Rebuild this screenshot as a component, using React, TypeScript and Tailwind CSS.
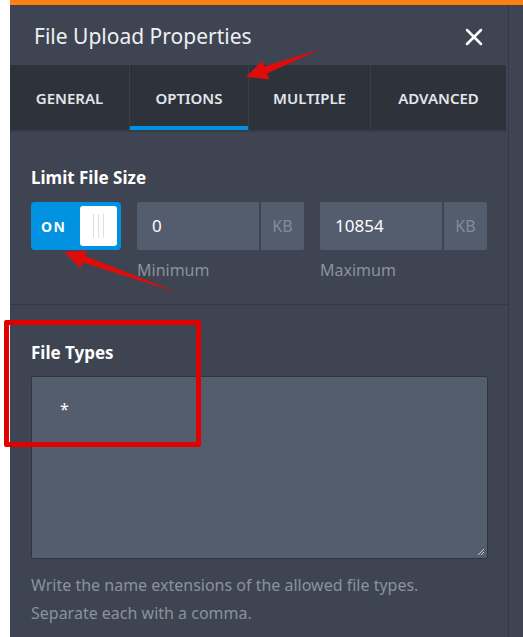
import { X } from "lucide-react";

const TABS = [
  { label: "GENERAL", w: "w-[119px]" },
  { label: "OPTIONS", w: "w-[119px]", active: true },
  { label: "MULTIPLE", w: "w-[122px]" },
  { label: "ADVANCED", w: "flex-1" },
];

function SizeInput({ value, label }: { value: string; label: string }) {
  return (
    <div className="flex flex-col">
      <div className="flex h-[48px] gap-[2px]">
        <div className="flex w-[122px] items-center rounded-l-[2px] bg-[#535d6e] pl-[15px] text-[17px] text-white">
          {value}
        </div>
        <div className="flex w-[43px] items-center justify-center rounded-r-[2px] bg-[#535d6e] text-[16px] text-[#838c9a]">
          KB
        </div>
      </div>
      <span className="mt-[8px] text-[16px] text-[#8a929f]">{label}</span>
    </div>
  );
}

export default function App() {
  return (
    <div
      className="relative flex h-[637px] w-[523px] overflow-hidden bg-white"
      style={{ fontFamily: '"Noto Sans", "Open Sans", sans-serif' }}
    >
      <div className="w-[10px] shrink-0" />
      <div className="flex flex-1 flex-col">
        <div className="h-[5px] bg-[#ff7f15]" />
        <div className="flex flex-1">
          {/* panel */}
          <div className="flex w-[498px] flex-col bg-[#3e4451]">
            <div className="flex h-[60px] items-center justify-between pl-[24px] pr-[20px] pt-[3px]">
              <h1 className="text-[21px] font-normal text-[#eef0f3]">File Upload Properties</h1>
              <X className="h-[28px] w-[28px] text-white" strokeWidth={2.2} />
            </div>

            <div className="mr-[2px] flex h-[67px] border-b-[2px] border-[#363c46] bg-[#2e333b]">
              {TABS.map((t, i) => (
                <div
                  key={t.label}
                  className={`${t.w} relative flex items-center justify-center pt-[2px] text-[15px] font-semibold text-[#e3e6ea] ${
                    i > 0 ? "border-l border-[#3a4049]" : ""
                  }`}
                >
                  {t.label}
                  {t.active && (
                    <div className="absolute bottom-0 left-0 right-0 h-[4px] bg-[#0093e3]" />
                  )}
                </div>
              ))}
            </div>

            <div className="flex h-[173px] flex-col border-b border-[#343a44] pl-[21px] pt-[35px]">
              <h2 className="text-[17px] font-bold leading-[22px] text-white">Limit File Size</h2>
              <div className="mt-[13px] flex">
                <div className="flex h-[48px] w-[90px] items-center rounded-[4px] bg-[#0092e0] pl-[10px] pr-[4px]">
                  <span className="text-[14px] font-bold tracking-[1.5px] text-white">ON</span>
                  <div className="ml-auto flex h-[40px] w-[37px] items-center justify-center gap-[4px] rounded-[3px] bg-white">
                    <div className="h-[24px] w-[1px] bg-[#dcdfe3]" />
                    <div className="h-[24px] w-[1px] bg-[#dcdfe3]" />
                    <div className="h-[24px] w-[1px] bg-[#dcdfe3]" />
                  </div>
                </div>
                <div className="ml-[16px]">
                  <SizeInput value="0" label="Minimum" />
                </div>
                <div className="ml-[16px]">
                  <SizeInput value="10854" label="Maximum" />
                </div>
              </div>
            </div>

            <div className="flex flex-1 flex-col pl-[21px] pr-[20px] pt-[37px]">
              <h2 className="text-[17px] font-bold leading-[22px] text-white">File Types</h2>
              <div className="relative mt-[12px] h-[183px] w-[457px] rounded-[2px] border border-[#2f353e] bg-[#535d6e] pl-[28px] pt-[20px]">
                <span className="text-[16px] text-white">*</span>
                <svg className="absolute bottom-[2px] right-[2px]" width="9" height="9" viewBox="0 0 9 9">
                  <path d="M8 2 L2 8 M8 5 L5 8" stroke="#c9ccd1" strokeWidth="1" />
                </svg>
              </div>
              <p className="mt-[12px] text-[16px] leading-[28px] text-[#8a929f]">
                Write the name extensions of the allowed file types.
                <br />
                Separate each with a comma.
              </p>
            </div>
          </div>
          <div className="flex-1 border-l border-[#353b45] bg-[#3e4451]" />
        </div>
      </div>

      {/* annotations */}
      <div className="pointer-events-none absolute left-[4px] top-[320px] h-[127px] w-[197px] rounded-[2px] border-[5px] border-[#e00000]" />
      <svg className="pointer-events-none absolute left-0 top-0" width="523" height="637" viewBox="0 0 523 637">
        <path d="M321 49 L264.4 66.6 L262.2 60.8 L246 77 L269.2 79.4 L267 73.6 Z" fill="#e00b0b" />
        <path d="M179 293 L82.5 262.5 L80.4 268.2 L64 252 L87.2 250.4 L85.1 256.1 Z" fill="#e00b0b" />
      </svg>
    </div>
  );
}
